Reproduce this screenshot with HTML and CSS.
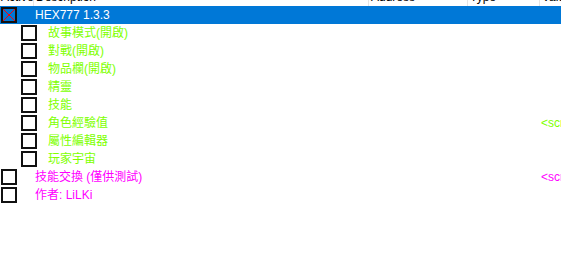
FILE: index.html
```html
<!DOCTYPE html>
<html>
<head>
<meta charset="utf-8">
<link rel="stylesheet" href="styles.css">
</head>
<body>
<div class="table">
  <div class="header">
    <div class="hcell c-active">Active</div>
    <div class="hcell c-desc">Description</div>
    <div class="hcell c-addr">Address</div>
    <div class="hcell c-type">Type</div>
    <div class="hcell c-val">Value</div>
  </div>
  <div class="rows">
    <div class="row selected">
      <div class="tree lvl0">
        <span class="box box-x"><svg width="12" height="12" viewBox="0 0 12 12"><line x1="0" y1="0" x2="12" y2="12" stroke="#ff0000" stroke-width="1"/><line x1="12" y1="0" x2="0" y2="12" stroke="#ff0000" stroke-width="1"/></svg></span>
        <span class="label root-label">HEX777 1.3.3</span>
      </div>
      <div class="val"></div>
    </div>
    <div class="row green"><div class="tree lvl1"><span class="box"></span><span class="label">故事模式(開啟)</span></div><div class="val"></div></div>
    <div class="row green"><div class="tree lvl1"><span class="box"></span><span class="label">對戰(開啟)</span></div><div class="val"></div></div>
    <div class="row green"><div class="tree lvl1"><span class="box"></span><span class="label">物品欄(開啟)</span></div><div class="val"></div></div>
    <div class="row green"><div class="tree lvl1"><span class="box"></span><span class="label">精靈</span></div><div class="val"></div></div>
    <div class="row green"><div class="tree lvl1"><span class="box"></span><span class="label">技能</span></div><div class="val"></div></div>
    <div class="row green"><div class="tree lvl1"><span class="box"></span><span class="label">角色經驗值</span></div><div class="val">&lt;script&gt;</div></div>
    <div class="row green"><div class="tree lvl1"><span class="box"></span><span class="label">屬性編輯器</span></div><div class="val"></div></div>
    <div class="row green"><div class="tree lvl1"><span class="box"></span><span class="label">玩家宇宙</span></div><div class="val"></div></div>
    <div class="row magenta"><div class="tree lvl0b"><span class="box"></span><span class="label">技能交換 (僅供測試)</span></div><div class="val">&lt;script&gt;</div></div>
    <div class="row magenta"><div class="tree lvl0b"><span class="box"></span><span class="label">作者: LiLKi</span></div><div class="val"></div></div>
  </div>
</div>
</body>
</html>
```
FILE: styles.css
```css
html, body {
  margin: 0;
  padding: 0;
  background: #ffffff;
  overflow: hidden;
}
body {
  font-family: "Liberation Sans", "Noto Sans CJK TC", sans-serif;
  font-size: 12px;
  width: 561px;
  height: 274px;
}
.table {
  width: 561px;
  overflow: hidden;
}
.header {
  display: flex;
  height: 18px;
  margin-top: -12px;
  line-height: 18px;
  color: #000;
  white-space: nowrap;
}
.hcell {
  box-sizing: border-box;
  border-right: 1px solid #e5e5e5;
  padding-left: 2px;
  overflow: hidden;
  flex: none;
}
.c-active { width: 34px; padding-left: 1px; }
.c-desc { width: 335px; }
.c-addr { width: 99px; }
.c-type { width: 72px; }
.c-val { width: 60px; border-right: none; }

.rows {
  display: flex;
  flex-direction: column;
}
.row {
  display: flex;
  height: 18px;
  align-items: center;
  white-space: nowrap;
}
.row.selected {
  background: #0078d7;
  color: #ffffff;
}
.row.green { color: #80ff00; }
.row.magenta { color: #ff00ff; }

.tree {
  box-sizing: border-box;
  width: 540px;
  flex: none;
  display: flex;
  align-items: center;
  height: 18px;
}
.lvl0 { padding-left: 1px; }
.lvl1 { padding-left: 21px; }
.lvl0b { padding-left: 1px; }

.box {
  box-sizing: border-box;
  width: 16px;
  height: 16px;
  border: 2px solid #111;
  flex: none;
  display: flex;
  align-items: center;
  justify-content: center;
}
.box-x svg { display: block; width: 12px; height: 12px; }
.lvl0 .label { margin-left: 18px; }
.lvl1 .label { margin-left: 11px; }
.lvl0b .label { margin-left: 18px; }
.label {
  line-height: 18px;
}
.val {
  padding-left: 1px;
  flex: none;
  line-height: 18px;
}
```
